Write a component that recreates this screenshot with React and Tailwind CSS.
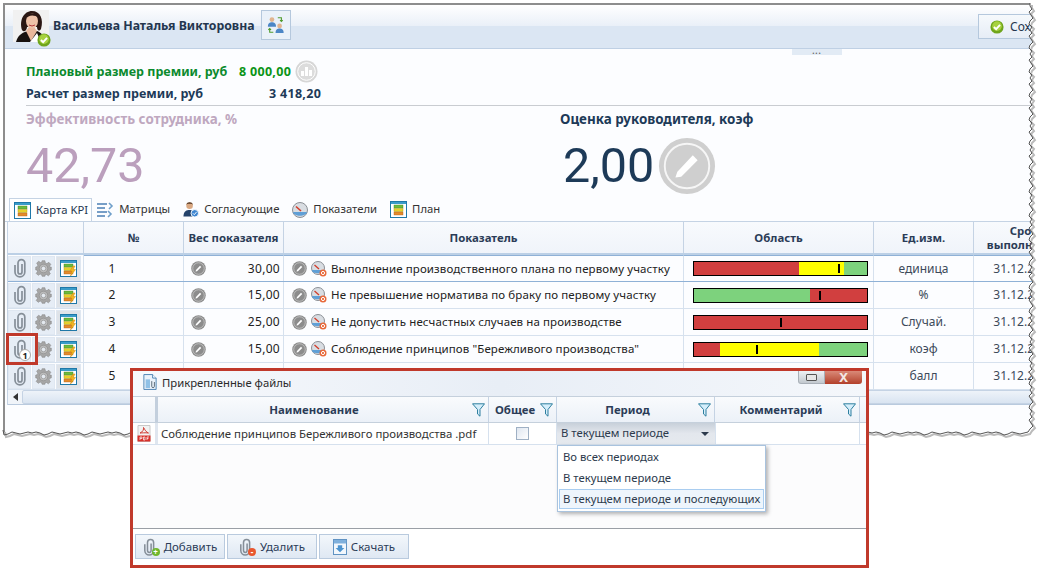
const rows = [
  { n: 1, weight: "30,00", name: "Выполнение производственного плана по первому участку", unit: "единица", bar: [["#d13f3f", 60.5], ["#ffff00", 26], ["#7dd27d", 13.5]], mark: 83.5, selected: true },
  { n: 2, weight: "15,00", name: "Не превышение норматива по браку по первому участку", unit: "%", bar: [["#7dd27d", 67], ["#d13f3f", 33]], mark: 72 },
  { n: 3, weight: "25,00", name: "Не допустить несчастных случаев на производстве", unit: "Случай.", bar: [["#d13f3f", 100]], mark: 49.5 },
  { n: 4, weight: "15,00", name: "Соблюдение принципов \"Бережливого производства\"", unit: "коэф", bar: [["#d13f3f", 15], ["#ffff00", 57], ["#7dd27d", 28]], mark: 36, badge: true },
  { n: 5, weight: "", name: "", unit: "балл", bar: null, mark: 0 },
];

// torn paper edge of the screenshot
function tornPath() {
  let d = "M1030 3";
  for (let y = 6, i = 0; y < 432; y += 3, i++) {
    d += ` L${1030 + [0, 2, -1, 1, 3, 0, -1, 2][i % 8]} ${y}`;
  }
  for (let x = 1028, i = 0; x > 2; x -= 4, i++) {
    d += ` L${x} ${432 + [0, 1, 2, 1, 0, 2, 3, 1, 0, 1][i % 10]}`;
  }
  return d + " L3 430";
}

function Avatar() {
  return (
    <svg width="36" height="34" viewBox="0 0 36 34">
      <rect width="36" height="32" fill="#f1f1f1" />
      <path d="M3 32 C5 24 11 22 15 21 L24 21 C29 23 31 26 32 32 Z" fill="#17110f" />
      <path d="M13 21 L18 31 L24 21 L21 17 L16 17 Z" fill="#e9b79c" />
      <path d="M17 32 L24 23 L28 32 Z" fill="#fff" />
      <path d="M9 20 C6 10 11 1 19 1 C27 1 31 9 28 19 C26 22 24 20 24 17 L14 17 C14 20 11 23 9 20 Z" fill="#2a1612" />
      <ellipse cx="19" cy="11" rx="6" ry="7.5" fill="#eec2a8" />
      <path d="M13 9 C15 5 21 4 26 8 L25 4 L15 3 Z" fill="#2a1612" />
      <path d="M16 15 Q19 17 22 15" stroke="#b5383c" strokeWidth="1" fill="none" />
    </svg>
  );
}

function OkBadge({ size = 14 }) {
  return (
    <svg width={size} height={size} viewBox="0 0 16 16">
      <circle cx="8" cy="8" r="7.5" fill="#6fa51c" />
      <circle cx="8" cy="7" r="5.5" fill="#a7d13f" />
      <path d="M4.5 8 L7 10.5 L11.5 5.5" stroke="#fff" strokeWidth="2.2" fill="none" />
    </svg>
  );
}

function SwapIcon() {
  return (
    <svg width="18" height="18" viewBox="0 0 20 20">
      <circle cx="5.5" cy="4" r="2.6" fill="#e0b48f" />
      <path d="M1 12 C1 8 3 7 5.5 7 C8 7 10 8 10 12 Z" fill="#4c86c6" />
      <circle cx="14" cy="11" r="2.6" fill="#e0b48f" />
      <path d="M9.5 19 C9.5 15 11.5 14 14 14 C16.5 14 18.5 15 18.5 19 Z" fill="#4c86c6" />
      <path d="M12 2 L16 2 L16 6 M14.5 4.5 L16 6 L17.5 4.5" stroke="#4f9a2c" strokeWidth="1.2" fill="none" />
      <path d="M7 18 L3 18 L3 14 M1.5 15.5 L3 14 L4.5 15.5" stroke="#4f9a2c" strokeWidth="1.2" fill="none" />
    </svg>
  );
}

function PencilDisc({ size = 15, fill = "#8c8c8c" }) {
  return (
    <svg width={size} height={size} viewBox="0 0 30 30" className="shrink-0">
      <circle cx="15" cy="15" r="14.5" fill={fill} />
      <circle cx="15" cy="15" r="11.5" fill="none" stroke="#fff" strokeWidth="1" opacity="0.8" />
      <path d="M10 18 L18 9.5 L20.5 12 L12 20.5 L9 21 Z" fill="#fff" />
    </svg>
  );
}

function ChartDisc() {
  return (
    <svg width="23" height="23" viewBox="0 0 23 23">
      <circle cx="11.5" cy="11.5" r="11" fill="#d6d6d6" />
      <circle cx="11.5" cy="11.5" r="8.8" fill="#dcdcdc" stroke="#fff" strokeWidth="1" />
      <path d="M6 16 V11 H9 V16 Z M10 16 V7 H13 V16 Z M14 16 V10 H17 V16 Z" fill="#fff" />
    </svg>
  );
}

function KpiIcon({ bolt }) {
  return (
    <svg width="17" height="17" viewBox="0 0 17 17">
      <rect x="0.5" y="0.5" width="16" height="16" fill="#fff" stroke="#1f78a8" />
      <rect x="1" y="1" width="15" height="2" fill="#3a9cc9" />
      <rect x="4" y="4" width="9" height="3" fill="#6dbb3c" stroke="#3f7d24" strokeWidth="0.4" />
      <rect x="4" y="7.5" width="9" height="3" fill="#e6d12a" stroke="#a89718" strokeWidth="0.4" />
      <rect x="4" y="11" width="9" height="3" fill="#e58a2a" stroke="#a8601a" strokeWidth="0.4" />
      {bolt && <path d="M13 6 L10 11 L12 11 L10.5 16 L15.5 9.5 L13.2 9.5 L15 6 Z" fill="#f3b521" stroke="#c98a12" strokeWidth="0.5" />}
    </svg>
  );
}

function GaugeIcon() {
  return (
    <svg width="16" height="16" viewBox="0 0 16 16" className="shrink-0">
      <circle cx="7" cy="7" r="6.5" fill="#d9dde2" stroke="#8b8f95" />
      <path d="M1 9 H13 V10 C12 13 2 13 1 10 Z" fill="#5f9fd6" />
      <path d="M3.5 4 L8 8" stroke="#d23c2a" strokeWidth="1.4" />
      <circle cx="12" cy="12" r="3.5" fill="#e8693a" />
      <circle cx="12" cy="12" r="1.6" fill="none" stroke="#fff" />
    </svg>
  );
}

function GearIcon() {
  return (
    <svg width="17" height="17" viewBox="0 0 24 24" fill="#a6a6a6" stroke="#868686" strokeWidth="0.8">
      <path d="M10 1 H14 L14.6 4.2 L16.8 5.1 L19.5 3.3 L22.3 6.1 L20.5 8.8 L21.4 10 L23 10 V14 L20.8 14.6 L19.9 16.8 L21.7 19.5 L18.9 22.3 L16.2 20.5 L14 21.4 L14 23 H10 L9.4 20.8 L7.2 19.9 L4.5 21.7 L1.7 18.9 L3.5 16.2 L2.6 14 L1 14 V10 L3.2 9.4 L4.1 7.2 L2.3 4.5 L5.1 1.7 L7.8 3.5 L10 2.6 Z" />
      <circle cx="12" cy="12" r="6" fill="#bdbdbd" />
      <circle cx="12" cy="12" r="3.2" fill="#e4e9ef" />
    </svg>
  );
}

function ClipIcon({ size = 20 }) {
  return (
    <svg width={size * 0.7} height={size} viewBox="0 0 14 20" fill="none" stroke="#858e98" strokeWidth="1.7">
      <path d="M9 6 V14 a2 2 0 0 1 -4 0 V5 a3.4 3.4 0 0 1 6.8 0 V14 a4.9 4.9 0 0 1 -9.8 0 V7" />
    </svg>
  );
}

function FilterIcon() {
  return (
    <svg width="13" height="14" viewBox="0 0 13 14" className="shrink-0">
      <path d="M0.5 0.8 H12.5 L8 6.5 V13.2 L5.5 11 V6.5 Z" fill="#d5eefb" stroke="#2e7f9f" strokeWidth="1" />
    </svg>
  );
}

function FileIcon() {
  return (
    <svg width="14" height="18" viewBox="0 0 16 18">
      <path d="M1 .5 H11 L15 4.5 V17.5 H1 Z" fill="#eaf2fa" stroke="#3e79ad" />
      <path d="M11 .5 V4.5 H15" fill="#fff" stroke="#3e79ad" />
      <rect x="3" y="6" width="5" height="10" fill="#8fc0e6" />
      <path d="M10 8 V14 C10 16 13 16 13 14 V9" fill="none" stroke="#4a5a68" />
    </svg>
  );
}

function PdfIcon() {
  return (
    <svg width="14" height="17" viewBox="0 0 14 17">
      <path d="M1 .5 H13 V16.5 H1 Z" fill="#f2f2f2" stroke="#c9c9c9" />
      <path d="M3 8 C6 7 7 4 6.5 2.5 C8 5 9 7 11.5 8 C8 7.5 5 8 3 8 Z" fill="none" stroke="#d23a32" />
      <rect x="0.5" y="10.5" width="13" height="6" fill="#d8312b" />
      <path d="M3 12 V15 M3 12 H5 V13.5 H3 M6.5 12 V15 H8 V12 Z M10 15 V12 H12 M10 13.5 H11.5" stroke="#fff" strokeWidth="0.7" fill="none" />
    </svg>
  );
}

function ClipBtnIcon({ color, sign }) {
  return (
    <span className="relative flex h-[20px] w-[17px] items-center">
      <ClipIcon size={18} />
      <span className="absolute bottom-[1px] right-0 flex h-[8px] w-[8px] items-center justify-center rounded-full text-[8px] font-bold leading-none text-white" style={{ background: color }}>{sign}</span>
    </span>
  );
}

function DownloadIcon() {
  return (
    <svg width="14" height="18" viewBox="0 0 16 18">
      <rect x="0.5" y="0.5" width="15" height="17" fill="#f2f7fc" stroke="#4d86bb" />
      <rect x="1" y="1" width="14" height="4" fill="#7fb0dc" />
      <path d="M5.5 7 H10.5 V10 H13 L8 15 L3 10 H5.5 Z" fill="#4d94cf" />
    </svg>
  );
}

function TabIcon({ kind }) {
  if (kind === "kpi") return <KpiIcon />;
  if (kind === "gauge") {
    return (
      <svg width="16" height="16" viewBox="0 0 16 16">
        <circle cx="8" cy="8" r="7.5" fill="#d9dde2" stroke="#8b8f95" />
        <path d="M1 10 H15 C14 15 2 15 1 10 Z" fill="#5f9fd6" />
        <path d="M4 4.5 L9 9" stroke="#d23c2a" strokeWidth="1.6" />
      </svg>
    );
  }
  if (kind === "matrix") {
    return (
      <svg width="18" height="16" viewBox="0 0 18 16">
        <path d="M1 2 H11 M1 6 H9 M1 10 H11 M1 14 H9" stroke="#4b7fb5" strokeWidth="1.6" />
        <path d="M13 1 L16 4 L13 7 M12 9 L15 12 L12 15" stroke="#6f9fca" strokeWidth="1.6" fill="none" />
      </svg>
    );
  }
  return (
    <svg width="16" height="17" viewBox="0 0 17 17">
      <circle cx="7" cy="4.5" r="3.5" fill="#d9a882" />
      <path d="M3.5 3.5 C4 0 10 0 10.5 3.5 L9 2.5 H5 Z" fill="#50331f" />
      <path d="M0.5 16 C0.5 10 4 9 7 9 C10 9 12 11 12 16 Z" fill="#25436b" />
      <circle cx="12.5" cy="12.5" r="4" fill="#3f86d0" stroke="#fff" />
      <path d="M10.5 12.5 L12 14 L14.5 11" stroke="#fff" fill="none" />
    </svg>
  );
}

function IconCell({ children, gray }) {
  return (
    <div className={`relative flex h-[25px] items-center justify-center border border-[#dfe7f1] ${gray ? "w-[25px] bg-[#dfe3e8]" : "w-[23px] bg-[#e6edf6]"}`}>
      {children}
    </div>
  );
}

function HeaderCell({ className = "", children }) {
  return (
    <div className={`flex items-center justify-center border-r border-[#c5d3e4] text-center text-[11.4px] font-bold leading-[14px] text-[#2b3c57] ${className}`}>
      {children}
    </div>
  );
}

function Row({ row }) {
  const sel = row.selected ? "border-t border-t-[#8fb1d6]" : "";
  return (
    <div className={`flex h-[27px] border-b ${row.selected ? "border-[#8fb1d6]" : "border-[#d6e1ee]"} text-[12px] text-[#222]`}>
      <div className="flex w-[76px] shrink-0 items-center gap-[1px] border-r border-[#d6e1ee]">
        <IconCell><ClipIcon /></IconCell>
        <IconCell><GearIcon /></IconCell>
        <IconCell gray><KpiIcon bolt /></IconCell>
      </div>
      <div className={`flex h-full w-[100px] shrink-0 items-center justify-center border-r border-[#d6e1ee] pr-[43px] ${sel}`}>{row.n}</div>
      <div className={`flex h-full w-[100px] shrink-0 items-center justify-between border-r border-[#d6e1ee] pl-[7px] pr-[3px] ${sel}`}>
        {row.weight && <PencilDisc />}
        <span className="tracking-[0.3px]">{row.weight}</span>
      </div>
      <div className={`flex h-full w-[400px] shrink-0 items-center gap-[4px] whitespace-nowrap border-r border-[#d6e1ee] pl-[8px] text-[11.5px] tracking-[0.1px] ${sel}`}>
        {row.name && <PencilDisc />}
        {row.name && <GaugeIcon />}
        <span>{row.name}</span>
      </div>
      <div className={`flex h-full w-[190px] shrink-0 items-center border-r border-[#d6e1ee] pl-[9px] ${sel}`}>
        {row.bar && (
          <div className="relative flex h-[15px] w-[175px] border border-black">
            {row.bar.map(([color, w]) => (
              <div key={color} className="h-full" style={{ background: color, width: `${w}%` }} />
            ))}
            <div className="absolute top-[2px] h-[9px] w-[2px] bg-black" style={{ left: `${row.mark}%` }} />
          </div>
        )}
      </div>
      <div className={`flex h-full w-[100px] shrink-0 items-center justify-center border-r border-[#d6e1ee] text-[#3d4a5a] ${sel}`}>{row.unit}</div>
      <div className={`flex h-full w-[100px] shrink-0 items-center justify-center text-[#3d4a5a] ${sel}`}>31.12.2016</div>
    </div>
  );
}

function Tab({ icon, label, active }) {
  return (
    <div className={`flex h-[23px] items-center gap-[5px] text-[11.3px] ${active ? "mr-[-9px] border border-b-0 border-[#c5d3e4] bg-white pl-[4px] pr-[3px] text-[#24364e]" : "text-[#333]"}`}>
      <TabIcon kind={icon} />
      <span>{label}</span>
    </div>
  );
}

function DialogBtn({ icon, label }) {
  return (
    <div className="flex h-[25px] w-[90px] items-center justify-center gap-[4px] border border-[#b9cade] bg-gradient-to-b from-[#f3f7fb] to-[#dfe8f3] text-[11.5px] text-[#2b3c57]">
      {icon}
      <span>{label}</span>
    </div>
  );
}

function Dialog() {
  return (
    <div className="absolute left-[130px] top-[368px] flex h-[200px] w-[739px] flex-col border-[3px] border-[#c0392b] bg-white text-[12px]">
      <div className="flex h-[25px] shrink-0 items-start bg-gradient-to-r from-[#f7f9fc] via-[#e8eef6] to-[#f4f7fb] pl-[10px] pt-[2px]">
        <FileIcon />
        <span className="ml-[5px] mt-[2px] text-[11.3px] leading-[16px] text-[#2a2a2a]">Прикрепленные файлы</span>
        <div className="ml-auto mr-[4px] -mt-[2px] flex h-[13px]">
          <div className="flex w-[27px] items-center justify-center rounded-bl-[3px] border border-t-0 border-[#a9b0b8] bg-gradient-to-b from-[#eef1f4] to-[#c3c9cf]">
            <div className="h-[7px] w-[11px] rounded-[1px] border border-[#555] bg-[#e6e6e6]" />
          </div>
          <div className="flex w-[37px] items-center justify-center rounded-br-[3px] bg-gradient-to-b from-[#d98a78] to-[#b23f2a] text-[13px] font-bold leading-[13px] text-[#f3e9e6]">X</div>
        </div>
      </div>
      <div className="flex h-[27px] shrink-0 border-y border-[#c5d0dc] bg-gradient-to-b from-[#f9fbfd] to-[#ecf1f8]">
        <div className="w-[25px] shrink-0 border-r-[3px] border-[#c3cfdd]" />
        <HeaderCell className="relative w-[331px] pr-[18px]">
          <span>Наименование</span>
          <span className="absolute right-[3px] top-[6px]"><FilterIcon /></span>
        </HeaderCell>
        <HeaderCell className="relative w-[68px] !justify-start pl-[6px]">
          <span>Общее</span>
          <span className="absolute right-[3px] top-[6px]"><FilterIcon /></span>
        </HeaderCell>
        <HeaderCell className="relative w-[158px] pr-[16px]">
          <span>Период</span>
          <span className="absolute right-[3px] top-[6px]"><FilterIcon /></span>
        </HeaderCell>
        <HeaderCell className="relative w-[145px] pr-[12px]">
          <span>Комментарий</span>
          <span className="absolute right-[3px] top-[6px]"><FilterIcon /></span>
        </HeaderCell>
      </div>
      <div className="flex h-[22px] shrink-0 border-b border-[#d6e1ee] text-[#333]">
        <div className="flex w-[25px] shrink-0 items-center justify-center border-r-[3px] border-[#dfe6ef]"><PdfIcon /></div>
        <div className="flex w-[331px] items-center whitespace-nowrap border-r border-[#d6e1ee] pl-[3px] text-[11.4px]">Соблюдение принципов Бережливого производства .pdf</div>
        <div className="flex w-[68px] items-center justify-center border-r border-[#d6e1ee]">
          <div className="h-[13px] w-[13px] border border-[#9fb0c4] bg-gradient-to-br from-[#dfe6f0] to-white" />
        </div>
        <div className="flex w-[158px] items-center justify-between bg-gradient-to-b from-[#c8d0da] via-[#e3e7ed] to-[#e5e9ee] pl-[4px] pr-[6px] text-[11.3px] text-[#2c3a4c]">
          <span>В текущем периоде</span>
          <span className="h-0 w-0 border-x-[4px] border-t-[4px] border-x-transparent border-t-[#2c3a4c]" />
        </div>
        <div className="w-[145px] border-x border-[#d6e1ee]" />
      </div>
      <div className="flex-1 bg-[#fcfcfd]" />
      <div className="flex h-[37px] shrink-0 items-start gap-[2px] border-t border-[#9a9fa6] pl-[2px] pt-[5px]">
        <DialogBtn icon={<ClipBtnIcon color="#6fb62c" sign="+" />} label="Добавить" />
        <DialogBtn icon={<ClipBtnIcon color="#e8572f" sign="-" />} label="Удалить" />
        <DialogBtn icon={<DownloadIcon />} label="Скачать" />
      </div>
      <div className="absolute left-[424px] top-[74px] flex h-[67px] w-[209px] flex-col border border-[#a9c3de] bg-white px-[1px] pt-[1px] text-[11.3px] text-[#2c3a4c] shadow-[2px_2px_4px_rgba(0,0,0,0.3)]">
        <div className="flex h-[21px] items-center pl-[4px]">Во всех периодах</div>
        <div className="flex h-[21px] items-center pl-[4px]">В текущем периоде</div>
        <div className="flex h-[20px] items-center whitespace-nowrap border border-[#a9cdf0] bg-[#eef5fc] pl-[3px]">В текущем периоде и последующих</div>
      </div>
    </div>
  );
}

export default function App() {
  return (
    <div className="relative h-[568px] w-[1041px] overflow-hidden bg-white font-['Noto_Sans','Open_Sans',sans-serif]">
      <div className="ml-[3px] pt-[3px]">
        <div className="h-[431px] w-[1030px] overflow-hidden border-l-2 border-t-2 border-[#8d8d8d] bg-[#fcfdff]">
          <div className="flex h-[44px] items-start border-b border-[#bfd0e4] bg-[linear-gradient(#ffffff_0%,#eaf0f8_48%,#dbe6f3_50%,#dbe6f3_100%)] pl-[8px] pt-[5px]">
            <div className="relative h-[36px] w-[36px] shrink-0">
              <Avatar />
              <span className="absolute bottom-[-1px] right-[-2px]"><OkBadge /></span>
            </div>
            <span className="ml-[4px] mt-[7px] whitespace-nowrap text-[12.3px] font-bold leading-[18px] text-[#24364e]">Васильева Наталья Викторовна</span>
            <div className="ml-[6px] flex h-[30px] w-[30px] items-center justify-center border border-[#b5c8dd] bg-[#eaf1f9]"><SwapIcon /></div>
            <div className="ml-auto mt-[4px] flex h-[25px] w-[55px] items-center gap-[6px] overflow-hidden border border-[#b5c8dd] bg-gradient-to-b from-[#f6f9fc] to-[#e6edf6] pl-[11px] text-[12px] text-[#24364e]">
              <span className="flex shrink-0"><OkBadge /></span>
              <span>Сохранить</span>
            </div>
          </div>
          <div className="ml-[787px] flex h-[6px] w-[50px] items-center justify-center bg-[#e2ebf5] text-[8px] font-bold leading-[6px] tracking-[1px] text-[#666]">
            <span className="-mt-[3px]">...</span>
          </div>

          <div className="flex pl-[21px] pt-[5px] text-[12.5px] font-bold leading-[21px]">
            <div className="flex w-[300px] items-center text-[#0b8a2e]">
              <span className="w-[213px]">Плановый размер премии, руб</span>
              <span className="tracking-[0.3px] text-[#0a9416]">8 000,00</span>
              <span className="ml-[4px] mr-[-24px] flex"><ChartDisc /></span>
            </div>
          </div>
          <div className="flex pl-[21px] text-[12.5px] font-bold leading-[21px] text-[#1d3a58]">
            <span className="w-[243px]">Расчет размер премии, руб</span>
            <span className="tracking-[0.3px]">3 418,20</span>
          </div>
          <div className="ml-[21px] mt-[1px] h-[1px] bg-[#c9ccd1]" />

          <div className="flex h-[92px] pl-[21px] pt-[4px]">
            <div className="w-[534px]">
              <div className="text-[13.4px] font-bold leading-[18px] text-[#bfa8c0]">Эффективность сотрудника, %</div>
              <div className="mt-[10px] font-['Roboto',sans-serif] text-[48.5px] font-normal leading-[56px] text-[#bb9fbd]">42,73</div>
            </div>
            <div>
              <div className="text-[13.4px] font-bold leading-[18px] text-[#1d3a58]">Оценка руководителя, коэф</div>
              <div className="mt-[10px] flex h-[56px] items-center gap-[4px] pl-[3px]">
                <span className="font-['Roboto',sans-serif] text-[48.5px] font-normal leading-[56px] text-[#1d3a58]">2,00</span>
                <PencilDisc size={58} fill="#cfcfcf" />
              </div>
            </div>
          </div>

          <div className="flex h-[24px] items-end gap-[13px] border-b border-[#c5d3e4] pl-[4px]">
            <Tab icon="kpi" label="Карта KPI" active />
            <Tab icon="matrix" label="Матрицы" />
            <Tab icon="user" label="Согласующие" />
            <Tab icon="gauge" label="Показатели" />
            <Tab icon="kpi" label="План" />
          </div>

          <div className="ml-[2px] border-l border-[#c5d3e4]">
            <div className="flex h-[33px] border-b-2 border-[#bcd0e6] bg-gradient-to-b from-[#f8fafd] to-[#f0f4fa]">
              <HeaderCell className="w-[76px] shrink-0" />
              <HeaderCell className="w-[100px] shrink-0">№</HeaderCell>
              <HeaderCell className="w-[100px] shrink-0">Вес показателя</HeaderCell>
              <HeaderCell className="w-[400px] shrink-0">Показатель</HeaderCell>
              <HeaderCell className="w-[190px] shrink-0">Область</HeaderCell>
              <HeaderCell className="w-[100px] shrink-0">Ед.изм.</HeaderCell>
              <HeaderCell className="w-[100px] shrink-0 border-r-0">Срок<br />выполнения</HeaderCell>
            </div>
            {rows.map((row) => (
              <Row key={row.n} row={row} />
            ))}
            <div className="flex h-[15px] items-center border-b border-[#b9cade] bg-[#f0f4f9] pl-[5px]">
              <span className="h-0 w-0 border-y-[4px] border-r-[5px] border-y-transparent border-r-[#333]" />
              <div className="ml-[4px] h-[14px] flex-1 rounded-[2px] border border-[#c5d3e4] bg-gradient-to-b from-[#eef3f9] to-[#d9e4f1]" />
            </div>
          </div>
        </div>
      </div>

      {/* highlight around the attachment button of row 4 */}
      <div className="absolute left-[6px] top-[333px] h-[32px] w-[32px] border-[3px] border-[#c0392b]">
        <span className="absolute left-[10px] top-[13px] flex h-[12px] w-[12px] items-center justify-center rounded-full border border-[#aaa] bg-white text-[9px] font-bold leading-none text-[#222]">1</span>
      </div>

      <svg className="pointer-events-none absolute left-0 top-0" width="1041" height="568">
        <path d={`${tornPath()} L3 568 L1041 568 L1041 3 Z`} fill="#fff" />
        <path d={tornPath()} fill="none" stroke="#bbb" strokeWidth="2" transform="translate(2 2)" />
        <path d={tornPath()} fill="none" stroke="#555" strokeWidth="1" />
      </svg>

      <Dialog />
    </div>
  );
}
